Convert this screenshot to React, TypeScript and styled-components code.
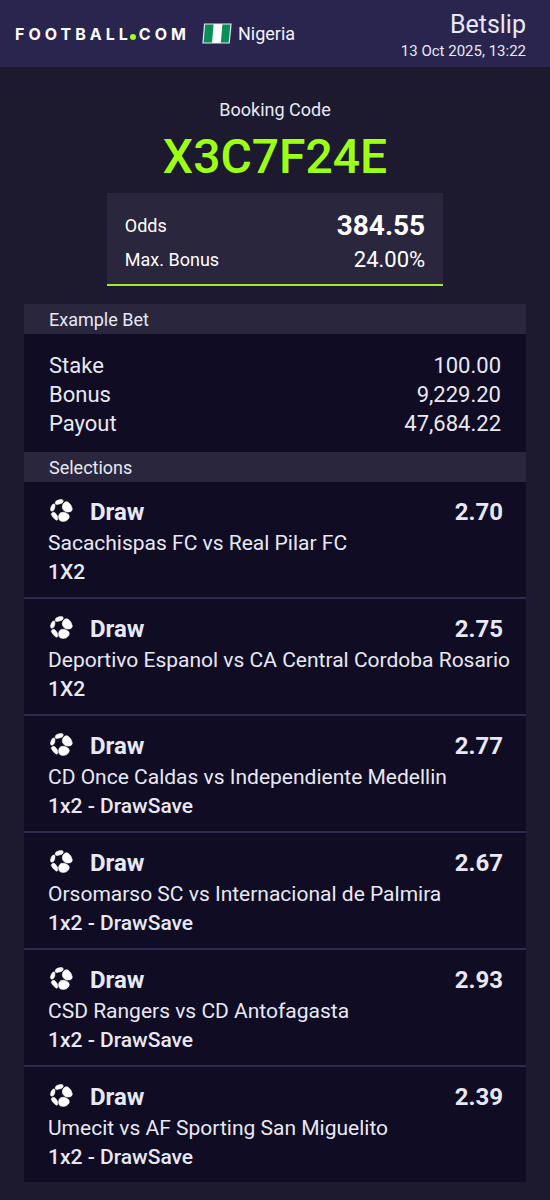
import React from "react";
import styled, { createGlobalStyle } from "styled-components";

const GlobalStyle = createGlobalStyle`
  *, *::before, *::after { box-sizing: border-box; }
  body {
    margin: 0;
    background: #1d1a30;
    color: #e8e8f4;
    font-family: Roboto, "Liberation Sans", sans-serif;
  }
  h1, h2, h3, p, dl, dd, dt, ul { margin: 0; padding: 0; font-weight: 400; }
`;

const Page = styled.div`
  min-height: 100vh;
  padding-bottom: 18px;
`;

const Header = styled.header`
  display: flex;
  justify-content: space-between;
  align-items: center;
  height: 67px;
  padding: 0 24px 0 15px;
  background: #29254f;
`;

const Brand = styled.div`
  display: flex;
  align-items: center;
`;

const Logo = styled.div`
  display: flex;
  align-items: baseline;
  color: #ffffff;
  font: 700 16px/20px Inter, "Open Sans", sans-serif;
  letter-spacing: 4px;
`;

const Dot = styled.span`
  width: 6px;
  height: 6px;
  margin: 0 3px 0 -2px;
  border-radius: 50%;
  background: #9cff1a;
`;

const Flag = styled.svg`
  width: 30px;
  height: 21px;
  margin: 0 6px 0 12px;
`;

const Country = styled.span`
  color: #f4f4fb;
  font-size: 18px;
  line-height: 24px;
`;

const HeaderInfo = styled.div`
  text-align: right;
  padding-top: 6px;
`;

const Title = styled.h1`
  font-size: 25px;
  line-height: 28px;
`;

const Timestamp = styled.p`
  font-size: 15px;
  line-height: 24px;
`;

const Booking = styled.section`
  display: flex;
  flex-direction: column;
  align-items: center;
  padding: 31px 24px 18px;
`;

const BookingLabel = styled.h2`
  font-size: 18px;
  line-height: 24px;
`;

const BookingCode = styled.p`
  color: #9dff12;
  font-size: 48px;
  font-weight: 500;
  line-height: 70px;
`;

const Summary = styled.dl`
  width: 67%;
  margin-top: 1px;
  padding: 16px 18px 8px;
  border-bottom: 2px solid #9dec2e;
  background: #29263d;
  color: #ffffff;
`;

const Line = styled.div<{ $height: number }>`
  display: flex;
  justify-content: space-between;
  align-items: center;
  min-height: ${(p) => p.$height}px;
`;

const SummaryLabel = styled.dt`
  font-size: 18px;
`;

const SummaryValue = styled.dd<{ $strong?: boolean }>`
  font-size: ${(p) => (p.$strong ? 28 : 22)}px;
  font-weight: ${(p) => (p.$strong ? 700 : 400)};
`;

const Slip = styled.main`
  margin: 0 24px;
  background: #0f0c24;
`;

const SectionTitle = styled.h2`
  padding: 2px 25px 0;
  background: #29263d;
  font-size: 18px;
  line-height: 28px;
`;

const Example = styled.dl`
  padding: 17px 25px 14px;
  font-size: 22px;
`;

const List = styled.ul`
  list-style: none;
`;

const Selection = styled.li`
  padding: 13px 6px 10px 24px;
  border-bottom: 2px solid #2d2a50;

  &:last-child {
    border-bottom: 0;
  }
`;

const Pick = styled.div`
  display: flex;
  align-items: center;
  padding-right: 17px;
  font-size: 24px;
  font-weight: 700;
  line-height: 34px;
`;

const Ball = styled.svg`
  width: 23px;
  height: 23px;
  margin: 0 17px 3px 2px;
  fill: #ffffff;
  stroke: #ffffff;
  stroke-width: 0.6;
  overflow: visible;
`;

const PickName = styled.h3`
  flex: 1;
  font-size: 24px;
  font-weight: 700;
`;

const Teams = styled.p`
  font-size: 21px;
  line-height: 29px;
`;

const Market = styled.p`
  font-size: 21px;
  font-weight: 500;
  line-height: 29px;
`;

const example = [
  ["Stake", "100.00"],
  ["Bonus", "9,229.20"],
  ["Payout", "47,684.22"],
];

const selections = [
  { odds: "2.70", teams: "Sacachispas FC vs Real Pilar FC", market: "1X2" },
  { odds: "2.75", teams: "Deportivo Espanol vs CA Central Cordoba Rosario", market: "1X2" },
  { odds: "2.77", teams: "CD Once Caldas vs Independiente Medellin", market: "1x2 - DrawSave" },
  { odds: "2.67", teams: "Orsomarso SC vs Internacional de Palmira", market: "1x2 - DrawSave" },
  { odds: "2.93", teams: "CSD Rangers vs CD Antofagasta", market: "1x2 - DrawSave" },
  { odds: "2.39", teams: "Umecit vs AF Sporting San Miguelito", market: "1x2 - DrawSave" },
];

const BallIcon = () => (
  <Ball viewBox="0 0 24 24" aria-hidden="true">
    <path d="M6.4 2 Q10 .2 13 .7 Q14.2 1.4 13.6 3 Q12.8 4.8 10.8 4.9 L7.4 5.8 Q5.4 5.8 5.4 4.4 Q5.6 3 6.4 2Z" />
    <path d="M15 3.6 Q16.4 2.2 18.8 3.2 Q22.6 6 23.3 10.4 Q23.2 12.4 21.4 13.2 Q18 14.2 15.6 12.8 Q12.6 11 12.8 8.2 Q13 5.2 15 3.6Z" />
    <path d="M11.4 14.2 Q14.6 13.2 17.4 14.8 Q20.2 16 20.2 18.4 Q19.8 21.2 17 22.8 Q13.6 24 10.6 22.8 Q8.9 21.4 8.9 18.6 Q9 15.4 11.4 14.2Z" />
    <path d="M3.2 5.2 Q5.4 4.8 5.2 7 L4.8 10 Q4.2 12.4 2 12.8 Q.4 12.6 .5 10.4 Q1 7 3.2 5.2Z" />
    <path d="M2.2 14.4 Q4.4 13.2 5.6 14.8 L7.4 17.2 Q8.2 19 8 21 Q7.8 22.6 6.2 21.8 Q2.6 19.6 1.4 16.2 Q1.2 15 2.2 14.4Z" />
  </Ball>
);

export default function App() {
  return (
    <Page>
      <GlobalStyle />
      <Header>
        <Brand>
          <Logo>
            <span>FOOTBALL</span>
            <Dot />
            <span>COM</span>
          </Logo>
          <Flag viewBox="0 0 30 21" aria-hidden="true">
            <path d="M2.6 1 H29 L27.2 20 H1 Z" fill="#0a8f56" />
            <path d="M11.6 1 H20.4 L18.8 20 H10 Z" fill="#ffffff" />
            <path d="M2.6 1 H29 L27.2 20 H1 Z" fill="none" stroke="#dfe6ee" strokeWidth="1.2" />
          </Flag>
          <Country>Nigeria</Country>
        </Brand>
        <HeaderInfo>
          <Title>Betslip</Title>
          <Timestamp>13 Oct 2025, 13:22</Timestamp>
        </HeaderInfo>
      </Header>
      <Booking>
        <BookingLabel>Booking Code</BookingLabel>
        <BookingCode>X3C7F24E</BookingCode>
        <Summary>
          <Line $height={33}>
            <SummaryLabel>Odds</SummaryLabel>
            <SummaryValue $strong>384.55</SummaryValue>
          </Line>
          <Line $height={34}>
            <SummaryLabel>Max. Bonus</SummaryLabel>
            <SummaryValue>24.00%</SummaryValue>
          </Line>
        </Summary>
      </Booking>
      <Slip>
        <SectionTitle>Example Bet</SectionTitle>
        <Example>
          {example.map(([label, value]) => (
            <Line key={label} $height={29}>
              <dt>{label}</dt>
              <dd>{value}</dd>
            </Line>
          ))}
        </Example>
        <SectionTitle>Selections</SectionTitle>
        <List>
          {selections.map((s) => (
            <Selection key={s.teams}>
              <Pick>
                <BallIcon />
                <PickName>Draw</PickName>
                <span>{s.odds}</span>
              </Pick>
              <Teams>{s.teams}</Teams>
              <Market>{s.market}</Market>
            </Selection>
          ))}
        </List>
      </Slip>
    </Page>
  );
}
